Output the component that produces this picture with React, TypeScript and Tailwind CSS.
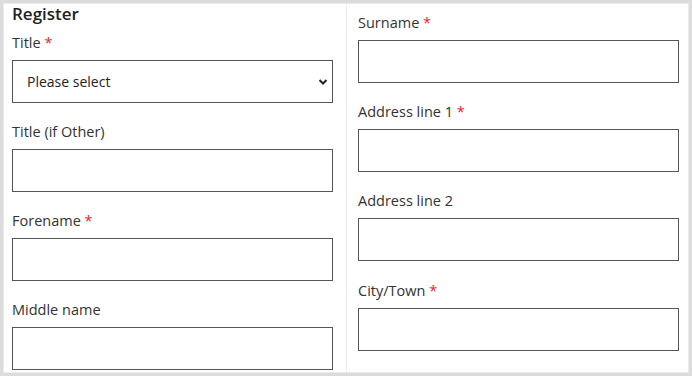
import React from "react";

const font = { fontFamily: '"Open Sans", "Liberation Sans", sans-serif' };

function Field({ label, required }: { label: string; required?: boolean }) {
  return (
    <div className="flex flex-col">
      <div className="h-[20px] leading-[20px] text-[14.5px] text-[#333]">
        {label}
        {required && <span className="text-[#e0262b]"> *</span>}
      </div>
      <div className="mt-[7px] h-[43px] w-[321px] border border-[#555] bg-white" />
    </div>
  );
}

export default function App() {
  return (
    <div
      className="w-[692px] h-[376px] bg-[#dcdcdc] pt-[3px] pl-[3px] pr-[3px] pb-[3px] overflow-hidden"
      style={font}
    >
      <div className="flex h-full bg-white border border-[#ececec]">
        <div className="w-[343px] shrink-0 border-r border-[#ececec] pl-[8px] flex flex-col">
          <div className="text-[17px] font-semibold leading-[22px] text-[#222] mt-[-1px]">Register</div>
          <div className="mt-[8px] flex flex-col">
            <div className="h-[20px] leading-[20px] text-[14.5px] text-[#333]">
              Title<span className="text-[#e0262b]"> *</span>
            </div>
            <div className="relative mt-[7px] h-[43px] w-[321px] border border-[#555] bg-white flex items-center">
              <span className="pl-[14px] text-[14px] text-[#222]">Please select</span>
              <svg
                className="absolute right-[4px] top-[17px]"
                width="10"
                height="8"
                viewBox="0 0 10 8"
              >
                <path d="M1.5 2 L5 5.5 L8.5 2" fill="none" stroke="#222" strokeWidth="2" />
              </svg>
            </div>
          </div>
          <div className="mt-[19px]">
            <Field label="Title (if Other)" />
          </div>
          <div className="mt-[19px]">
            <Field label="Forename" required />
          </div>
          <div className="mt-[19px]">
            <Field label="Middle name" />
          </div>
        </div>
        <div className="flex-1 pl-[11px] pt-[9px] flex flex-col">
          <Field label="Surname" required />
          <div className="mt-[19px]">
            <Field label="Address line 1" required />
          </div>
          <div className="mt-[19px]">
            <Field label="Address line 2" />
          </div>
          <div className="mt-[20px]">
            <Field label="City/Town" required />
          </div>
        </div>
      </div>
    </div>
  );
}
